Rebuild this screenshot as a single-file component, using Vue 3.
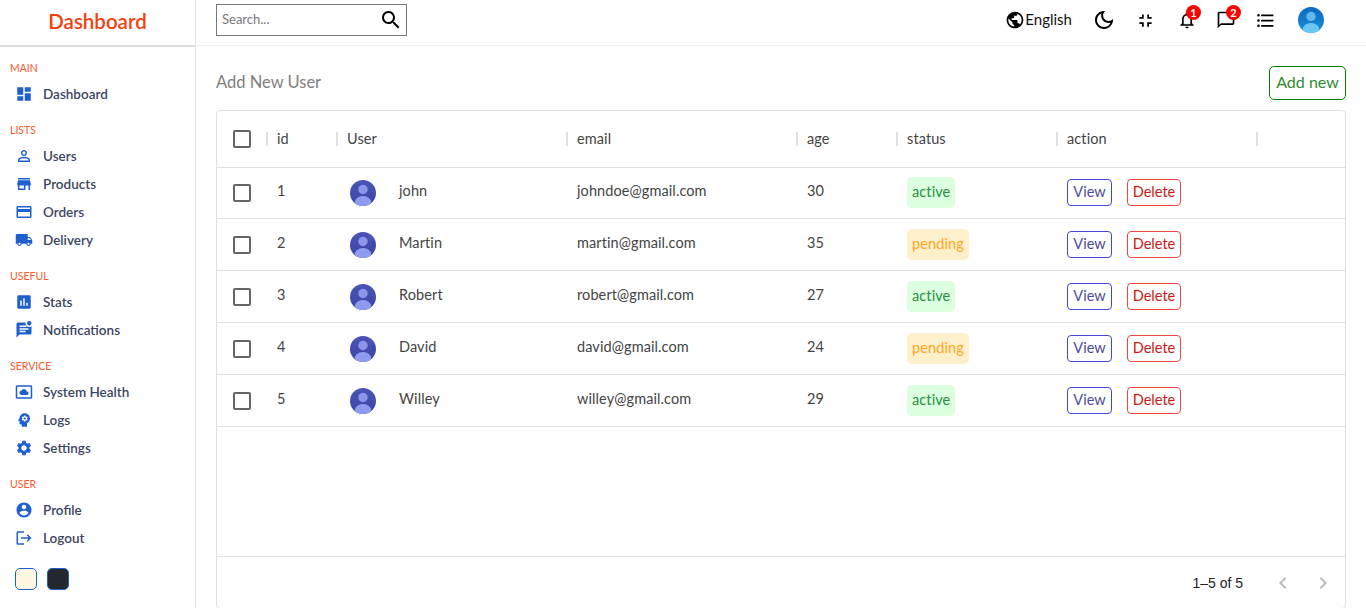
<script setup>
const icons = {
  dashboard: 'M3 13h8V3H3v10zm0 8h8v-6H3v6zm10 0h8V11h-8v10zm0-18v6h8V3h-8z',
  person: 'M12 5.9c1.16 0 2.1.94 2.1 2.1s-.94 2.1-2.1 2.1S9.9 9.16 9.9 8s.94-2.1 2.1-2.1m0 9c2.97 0 6.1 1.46 6.1 2.1v1.1H5.9V17c0-.64 3.13-2.1 6.1-2.1M12 4C9.79 4 8 5.79 8 8s1.79 4 4 4 4-1.79 4-4-1.79-4-4-4zm0 9c-2.67 0-8 1.34-8 4v3h16v-3c0-2.66-5.33-4-8-4z',
  store: 'M20 4H4v2h16V4zm1 10v-2l-1-5H4l-1 5v2h1v6h10v-6h4v6h2v-6h1zm-9 4H6v-4h6v4z',
  card: 'M20 4H4c-1.11 0-1.99.89-1.99 2L2 18c0 1.11.89 2 2 2h16c1.11 0 2-.89 2-2V6c0-1.11-.89-2-2-2zm0 14H4v-6h16v6zm0-10H4V6h16v2z',
  truck: 'M20 8h-3V4H3c-1.1 0-2 .9-2 2v11h2c0 1.66 1.34 3 3 3s3-1.34 3-3h6c0 1.66 1.34 3 3 3s3-1.34 3-3h2v-5l-3-4zM6 18.5c-.83 0-1.5-.67-1.5-1.5s.67-1.5 1.5-1.5 1.5.67 1.5 1.5-.67 1.5-1.5 1.5zm13.5-9l1.96 2.5H17V9.5h2.5zm-1.5 9c-.83 0-1.5-.67-1.5-1.5s.67-1.5 1.5-1.5 1.5.67 1.5 1.5-.67 1.5-1.5 1.5z',
  stats: 'M19 3H5c-1.1 0-2 .9-2 2v14c0 1.1.9 2 2 2h14c1.1 0 2-.9 2-2V5c0-1.1-.9-2-2-2zM9 17H7v-7h2v7zm4 0h-2V7h2v10zm4 0h-2v-4h2v4z',
  chat: 'M22 6.98V16c0 1.1-.9 2-2 2H6l-4 4V4c0-1.1.9-2 2-2h10.1c-.06.32-.1.66-.1 1 0 2.76 2.24 5 5 5 1.13 0 2.16-.39 3-1.02zM6 6v2h9V6zM6 9.5v2h12v-2zM6 13v2h8v-2zM19 0a3 3 0 1 0 0 6 3 3 0 0 0 0-6z',
  health: 'M21 3H3c-1.1 0-2 .9-2 2v14c0 1.1.9 2 2 2h18c1.1 0 2-.9 2-2V5c0-1.1-.9-2-2-2zm0 16.01H3V4.99h18v14.02zM9 16h6.5c1.38 0 2.5-1.12 2.5-2.5S16.88 11 15.5 11h-.05c-.24-1.69-1.69-3-3.45-3-1.4 0-2.6.83-3.16 2.02h-.16C7.17 10.18 6 11.45 6 13c0 1.66 1.34 3 3 3z',
  logs: 'M13 8.57c-.79 0-1.43.64-1.43 1.43s.64 1.43 1.43 1.43 1.43-.64 1.43-1.43-.64-1.43-1.43-1.43zM13 3C9.25 3 6.19 5.94 6.02 9.64L4.1 12.2c-.25.33-.01.8.4.8H6v3c0 1.1.9 2 2 2h1v3h7v-4.68c2.36-1.12 4-3.53 4-6.32 0-3.87-3.13-7-7-7zm3 7c0 .13-.01.26-.02.39l.83.66c.08.06.1.16.05.25l-.8 1.39c-.05.09-.16.12-.24.09l-.99-.4c-.21.16-.43.29-.67.39L14 13.83c-.01.1-.1.17-.2.17h-1.6c-.1 0-.18-.07-.2-.17l-.15-1.06c-.25-.1-.47-.23-.68-.39l-.99.4c-.09.03-.2 0-.25-.09l-.8-1.39c-.05-.08-.03-.19.05-.25l.84-.66c-.01-.13-.02-.26-.02-.39s.02-.27.04-.39l-.85-.66c-.08-.06-.1-.16-.05-.26l.8-1.38c.05-.09.15-.12.24-.09l1 .4c.2-.15.43-.29.67-.39L12 6.17c.02-.1.1-.17.2-.17h1.6c.1 0 .18.07.2.17l.15 1.06c.24.1.46.23.67.39l1-.4c.09-.03.2 0 .24.09l.8 1.38c.05.09.03.2-.05.26l-.85.66c.03.12.04.25.04.39z',
  settings: 'M19.14 12.94c.04-.3.06-.61.06-.94 0-.32-.02-.64-.07-.94l2.03-1.58c.18-.14.23-.41.12-.61l-1.92-3.32c-.12-.22-.37-.29-.59-.22l-2.39.96c-.5-.38-1.03-.7-1.62-.94l-.36-2.54c-.04-.24-.24-.41-.48-.41h-3.84c-.24 0-.43.17-.47.41l-.36 2.54c-.59.24-1.13.57-1.62.94l-2.39-.96c-.22-.08-.47 0-.59.22L2.74 8.87c-.12.21-.08.47.12.61l2.03 1.58c-.05.3-.09.63-.09.94s.02.64.07.94l-2.03 1.58c-.18.14-.23.41-.12.61l1.92 3.32c.12.22.37.29.59.22l2.39-.96c.5.38 1.03.7 1.62.94l.36 2.54c.05.24.24.41.48.41h3.84c.24 0 .44-.17.47-.41l.36-2.54c.59-.24 1.13-.56 1.62-.94l2.39.96c.22.08.47 0 .59-.22l1.92-3.32c.12-.22.07-.47-.12-.61l-2.01-1.58zM12 15.6c-1.98 0-3.6-1.62-3.6-3.6s1.62-3.6 3.6-3.6 3.6 1.62 3.6 3.6-1.62 3.6-3.6 3.6z',
  profile: 'M12 2C6.48 2 2 6.48 2 12s4.48 10 10 10 10-4.48 10-10S17.52 2 12 2zm0 3c1.66 0 3 1.34 3 3s-1.34 3-3 3-3-1.34-3-3 1.34-3 3-3zm0 14.2c-2.5 0-4.71-1.28-6-3.22.03-1.99 4-3.08 6-3.08 1.99 0 5.97 1.09 6 3.08-1.29 1.94-3.5 3.22-6 3.22z',
  logout: 'M17 7l-1.41 1.41L18.17 11H8v2h10.17l-2.58 2.58L17 17l5-5zM4 5h8V3H4c-1.1 0-2 .9-2 2v14c0 1.1.9 2 2 2h8v-2H4V5z',
  language: 'M12 2C6.48 2 2 6.48 2 12s4.48 10 10 10 10-4.48 10-10S17.52 2 12 2zm-1 17.93c-3.95-.49-7-3.85-7-7.93 0-.62.08-1.21.21-1.79L9 15v1c0 1.1.9 2 2 2v1.93zm6.9-2.54c-.26-.81-1-1.39-1.9-1.39h-1v-3c0-.55-.45-1-1-1H8v-2h2c.55 0 1-.45 1-1V7h2c1.1 0 2-.9 2-2v-.41c2.93 1.19 5 4.06 5 7.41 0 2.08-.8 3.97-2.1 5.39z',
  moon: 'M9.37 5.51c-.18.64-.27 1.31-.27 1.99 0 4.08 3.32 7.4 7.4 7.4.68 0 1.35-.09 1.99-.27C17.45 17.19 14.93 19 12 19c-3.86 0-7-3.14-7-7 0-2.93 1.81-5.45 4.37-6.49zM12 3c-4.97 0-9 4.03-9 9s4.03 9 9 9 9-4.03 9-9c0-.46-.04-.92-.1-1.36-.98 1.37-2.58 2.26-4.4 2.26-2.98 0-5.4-2.42-5.4-5.4 0-1.81.89-3.42 2.26-4.4C12.92 3.04 12.46 3 12 3z',
  shrink: 'M5 16h3v3h2v-5H5v2zm3-8H5v2h5V5H8v3zm6 11h2v-3h3v-2h-5v5zm2-11V5h-2v5h5V8h-3z',
  bell: 'M12 22c1.1 0 2-.9 2-2h-4c0 1.1.9 2 2 2zm6-6v-5c0-3.07-1.63-5.64-4.5-6.32V4c0-.83-.67-1.5-1.5-1.5s-1.5.67-1.5 1.5v.68C7.64 5.36 6 7.92 6 11v5l-2 2v1h16v-1l-2-2zm-2 1H8v-6c0-2.48 1.51-4.5 4-4.5s4 2.02 4 4.5v6z',
  bubble: 'M20 2H4c-1.1 0-2 .9-2 2v18l4-4h14c1.1 0 2-.9 2-2V4c0-1.1-.9-2-2-2zm0 14H6l-2 2V4h16v12z',
  list: 'M4 10.5c-.83 0-1.5.67-1.5 1.5s.67 1.5 1.5 1.5 1.5-.67 1.5-1.5-.67-1.5-1.5-1.5zm0-6c-.83 0-1.5.67-1.5 1.5S3.17 7.5 4 7.5 5.5 6.83 5.5 6 4.83 4.5 4 4.5zm0 12c-.83 0-1.5.68-1.5 1.5s.68 1.5 1.5 1.5 1.5-.68 1.5-1.5-.67-1.5-1.5-1.5zM7 19h14v-2H7v2zm0-6h14v-2H7v2zm0-8v2h14V5H7z',
  search: 'M15.5 14h-.79l-.28-.27C15.41 12.59 16 11.11 16 9.5 16 5.91 13.09 3 9.5 3S3 5.91 3 9.5 5.91 16 9.5 16c1.61 0 3.09-.59 4.23-1.57l.27.28v.79l5 4.99L20.49 19l-4.99-5zm-6 0C7.01 14 5 11.99 5 9.5S7.01 5 9.5 5 14 7.01 14 9.5 11.99 14 9.5 14z',
  checkbox: 'M19 5v14H5V5h14m0-2H5c-1.1 0-2 .9-2 2v14c0 1.1.9 2 2 2h14c1.1 0 2-.9 2-2V5c0-1.1-.9-2-2-2z',
  prev: 'M15.41 7.41L14 6l-6 6 6 6 1.41-1.41L10.83 12z',
  next: 'M10 6L8.59 7.41 13.17 12l-4.58 4.59L10 18l6-6z'
}

const menu = [
  { title: 'MAIN', items: [{ label: 'Dashboard', icon: 'dashboard' }] },
  { title: 'LISTS', items: [
    { label: 'Users', icon: 'person' },
    { label: 'Products', icon: 'store' },
    { label: 'Orders', icon: 'card' },
    { label: 'Delivery', icon: 'truck' }
  ] },
  { title: 'USEFUL', items: [
    { label: 'Stats', icon: 'stats' },
    { label: 'Notifications', icon: 'chat' }
  ] },
  { title: 'SERVICE', items: [
    { label: 'System Health', icon: 'health' },
    { label: 'Logs', icon: 'logs' },
    { label: 'Settings', icon: 'settings' }
  ] },
  { title: 'USER', items: [
    { label: 'Profile', icon: 'profile' },
    { label: 'Logout', icon: 'logout' }
  ] }
]

const headers = ['id', 'User', 'email', 'age', 'status', 'action']

const users = [
  { id: 1, name: 'john', email: 'johndoe@gmail.com', age: 30, status: 'active' },
  { id: 2, name: 'Martin', email: 'martin@gmail.com', age: 35, status: 'pending' },
  { id: 3, name: 'Robert', email: 'robert@gmail.com', age: 27, status: 'active' },
  { id: 4, name: 'David', email: 'david@gmail.com', age: 24, status: 'pending' },
  { id: 5, name: 'Willey', email: 'willey@gmail.com', age: 29, status: 'active' }
]
</script>

<template>
  <div class="page">
    <!-- 左侧菜单 -->
    <aside class="sidebar">
      <div class="logo">Dashboard</div>
      <nav class="menu">
        <div v-for="group in menu" :key="group.title" class="group">
          <p class="group-title">{{ group.title }}</p>
          <div v-for="item in group.items" :key="item.label" class="menu-item">
            <svg class="menu-icon" viewBox="0 0 24 24"><path :d="icons[item.icon]" /></svg>
            <span>{{ item.label }}</span>
          </div>
        </div>
      </nav>
      <div class="themes">
        <div class="swatch swatch--light"></div>
        <div class="swatch swatch--dark"></div>
      </div>
    </aside>

    <div class="main">
      <!-- 顶部栏 -->
      <header class="navbar">
        <div class="search">
          <span class="search-text">Search...</span>
          <svg class="search-icon" viewBox="0 0 24 24"><path :d="icons.search" /></svg>
        </div>
        <div class="nav-items">
          <div class="lang">
            <svg class="nav-icon" viewBox="0 0 24 24"><path :d="icons.language" /></svg>
            <span class="lang-text">English</span>
          </div>
          <svg class="nav-icon nav-icon--moon" viewBox="0 0 24 24"><path :d="icons.moon" /></svg>
          <svg class="nav-icon nav-icon--wide" viewBox="0 0 24 24"><path :d="icons.shrink" /></svg>
          <div class="nav-badged">
            <svg class="nav-icon" viewBox="0 0 24 24"><path :d="icons.bell" /></svg>
            <span class="badge">1</span>
          </div>
          <div class="nav-badged">
            <svg class="nav-icon" viewBox="0 0 24 24"><path :d="icons.bubble" /></svg>
            <span class="badge badge--chat">2</span>
          </div>
          <svg class="nav-icon nav-icon--wide nav-icon--list" viewBox="0 0 24 24"><path :d="icons.list" /></svg>
          <svg class="nav-avatar" viewBox="0 0 26 26">
            <defs>
              <linearGradient id="navBg" x1="0" y1="0" x2="0" y2="1">
                <stop offset="0" stop-color="#0b6abf" />
                <stop offset="1" stop-color="#1a8ed8" />
              </linearGradient>
              <clipPath id="navClip"><circle cx="13" cy="13" r="13" /></clipPath>
            </defs>
            <circle cx="13" cy="13" r="13" fill="url(#navBg)" />
            <g clip-path="url(#navClip)">
              <circle cx="13" cy="9.5" r="4.7" fill="#62b8ec" />
              <ellipse cx="13" cy="23" rx="8.5" ry="7" fill="#68c6f3" />
            </g>
          </svg>
        </div>
      </header>

      <main class="content">
        <div class="title-row">
          <span class="title">Add New User</span>
          <button class="add-btn">Add new</button>
        </div>

        <div class="grid-box">
          <div class="row row--head">
            <div class="cell cell--check">
              <svg class="check" viewBox="0 0 24 24"><path :d="icons.checkbox" /></svg>
            </div>
            <div v-for="h in headers" :key="h" class="cell cell--head">{{ h }}</div>
            <div class="cell cell--head"></div>
          </div>

          <div v-for="u in users" :key="u.id" class="row row--body">
            <div class="cell cell--check">
              <svg class="check" viewBox="0 0 24 24"><path :d="icons.checkbox" /></svg>
            </div>
            <div class="cell cell--text">{{ u.id }}</div>
            <div class="cell cell--user">
              <svg class="avatar" viewBox="0 0 26 26">
                <defs>
                  <linearGradient :id="'bg' + u.id" x1="0" y1="0" x2="0" y2="1">
                    <stop offset="0" stop-color="#4a55b6" />
                    <stop offset="1" stop-color="#3843a3" />
                  </linearGradient>
                  <clipPath :id="'clip' + u.id"><circle cx="13" cy="13" r="13" /></clipPath>
                </defs>
                <circle cx="13" cy="13" r="13" :fill="'url(#bg' + u.id + ')'" />
                <g :clip-path="'url(#clip' + u.id + ')'">
                  <circle cx="13" cy="9.5" r="4.7" fill="#8a96ea" />
                  <ellipse cx="13" cy="23" rx="8.5" ry="7" fill="#8f9bf0" />
                </g>
              </svg>
              <span class="cell--text">{{ u.name }}</span>
            </div>
            <div class="cell cell--text">{{ u.email }}</div>
            <div class="cell cell--text">{{ u.age }}</div>
            <div class="cell cell--status">
              <span class="status" :class="'status--' + u.status">{{ u.status }}</span>
            </div>
            <div class="cell cell--actions">
              <button class="btn btn--view">View</button>
              <button class="btn btn--delete">Delete</button>
            </div>
          </div>

          <div class="spacer"></div>

          <div class="grid-footer">
            <span class="page-info">1–5 of 5</span>
            <svg class="page-arrow" viewBox="0 0 24 24"><path :d="icons.prev" /></svg>
            <svg class="page-arrow" viewBox="0 0 24 24"><path :d="icons.next" /></svg>
          </div>
        </div>
      </main>
    </div>
  </div>
</template>

<style>
html, body {
  margin: 0;
  height: 100%;
  overflow: hidden;
  background: #fff;
}
</style>

<style scoped>
.page {
  display: flex;
  height: 608px;
  overflow: hidden;
  font-family: Lato, "Noto Sans", sans-serif;
  color: #404040;
}

.sidebar {
  width: 195px;
  flex: none;
  border-right: 1px solid #e0e0e0;
}

.logo {
  height: 45px;
  line-height: 42px;
  border-bottom: 2px solid #ddd;
  text-align: center;
  font-size: 20.5px;
  font-weight: 600;
  color: #f4400f;
}

.menu {
  padding-left: 10px;
  padding-top: 14px;
}

.group {
  margin-bottom: 15px;
}

.group-title {
  margin: 0 0 5px;
  height: 14px;
  line-height: 14px;
  font-size: 10.5px;
  color: #fb5a2a;
}

.menu-item {
  display: flex;
  align-items: center;
  height: 28px;
  font-size: 13.5px;
  font-weight: 600;
  color: #3c4563;
}

.menu-icon {
  width: 18px;
  height: 18px;
  margin: 0 10px 0 5px;
  fill: #1f60d0;
}

.themes {
  display: flex;
  gap: 10px;
  padding: 1px 0 0 15px;
}

.swatch {
  width: 20px;
  height: 20px;
  border: 1px solid #1f60d0;
  border-radius: 5px;
}

.swatch--light { background: #fff8e1; }
.swatch--dark { background: #23272e; }

.main {
  flex: 1;
  min-width: 0;
}

.navbar {
  display: flex;
  justify-content: space-between;
  height: 45px;
  border-bottom: 1px solid #f0f0f0;
  padding: 0 20px;
}

.search {
  display: flex;
  align-items: center;
  justify-content: space-between;
  width: 191px;
  height: 32px;
  margin-top: 4px;
  border: 1px solid #777;
  padding: 0 3px 0 5px;
  box-sizing: border-box;
}

.search-text {
  font-size: 13px;
  color: #777;
  padding-bottom: 2px;
}

.search-icon {
  width: 24px;
  height: 24px;
}

.nav-items {
  display: flex;
  align-items: center;
  height: 40px;
  margin-right: 22px;
}

.lang {
  display: flex;
  align-items: center;
  font-size: 15px;
  color: #111;
  margin-right: 20px;
}

.lang-text {
  padding-bottom: 2px;
}

.nav-icon {
  width: 20px;
  height: 20px;
  fill: #000;
  display: block;
}

.nav-icon--moon {
  width: 24px;
  height: 24px;
  margin-right: 19px;
}

.nav-icon--wide {
  width: 21px;
  height: 21px;
  margin-right: 21px;
}

.nav-icon--list {
  margin-right: 22px;
}

.nav-badged {
  position: relative;
  margin-right: 19px;
}

.badge {
  position: absolute;
  top: -5px;
  right: -4px;
  width: 15px;
  height: 15px;
  border-radius: 50%;
  background: #f00;
  color: #fff;
  font-size: 11px;
  font-weight: 700;
  line-height: 15px;
  text-align: center;
}

.badge--chat {
  right: -5px;
}

.nav-avatar {
  width: 26px;
  height: 26px;
}

.content {
  padding: 20px 20px 0;
}

.title-row {
  display: flex;
  align-items: center;
  justify-content: space-between;
  height: 34px;
  margin-bottom: 10px;
}

.title {
  font-size: 16.5px;
  color: #808080;
  padding-bottom: 3px;
}

.add-btn {
  height: 34px;
  width: 77px;
  padding: 0 0 3px;
  border: 1px solid #008000;
  border-radius: 5px;
  background: #fff;
  color: #2e8b2e;
  font: inherit;
  font-size: 16px;
}

.grid-box {
  display: flex;
  flex-direction: column;
  height: 497px;
  border: 1px solid #e0e0e0;
  border-radius: 4px;
}

.row {
  display: grid;
  grid-template-columns: 50px 70px 230px 230px 100px 160px 200px 1fr;
  align-items: center;
  border-bottom: 1px solid #e0e0e0;
}

.row--head { height: 56px; }
.row--body { height: 51px; }
.row--head + .row--body { height: 50px; }

.cell {
  font-size: 14.5px;
  letter-spacing: 0.1px;
  color: #444;
  padding-left: 10px;
  white-space: nowrap;
}

.cell--text {
  line-height: 20px;
  padding-bottom: 4px;
}

.cell--check {
  padding-left: 16px;
  display: flex;
}

.check {
  width: 24px;
  height: 24px;
  margin-left: -3px;
  fill: #666;
}

.cell--head {
  height: 14px;
  line-height: 14px;
  margin-left: -1px;
  border-left: 2px solid #e0e0e0;
  padding-left: 9px;
}

.cell--user {
  display: flex;
  align-items: center;
  gap: 23px;
  padding-left: 13px;
}

.avatar {
  width: 26px;
  height: 26px;
  flex: none;
}

.cell--status {
  padding-bottom: 1px;
}

.status {
  display: block;
  width: fit-content;
  padding: 4px 5px 6px;
  border-radius: 5px;
  line-height: 21px;
}

.status--active { background: #dcffe0; color: #1f8f3c; }
.status--pending { background: #fff0cc; color: #ffa620; }

.cell--actions {
  display: flex;
  gap: 15px;
  padding-bottom: 1px;
}

.btn {
  height: 27px;
  padding: 0 0 2px;
  border-radius: 4px;
  background: #fff;
  font: inherit;
  font-size: 14.5px;
}

.btn--view { width: 45px; border: 1px solid #4444dd; color: #4b4b99; }
.btn--delete { width: 54px; border: 1px solid #f04545; color: #c81818; }

.spacer { flex: 1; }

.grid-footer {
  display: flex;
  align-items: center;
  justify-content: flex-end;
  height: 52px;
  border-top: 1px solid #e0e0e0;
  padding-right: 10px;
  box-sizing: border-box;
}

.page-info {
  font-family: "Liberation Sans", Arial, sans-serif;
  font-size: 14px;
  color: #222;
  margin-right: 28px;
}

.page-arrow {
  width: 24px;
  height: 24px;
  margin-left: 16px;
  fill: #bdbdbd;
}
.page-info + .page-arrow { margin-left: 0; }
</style>
